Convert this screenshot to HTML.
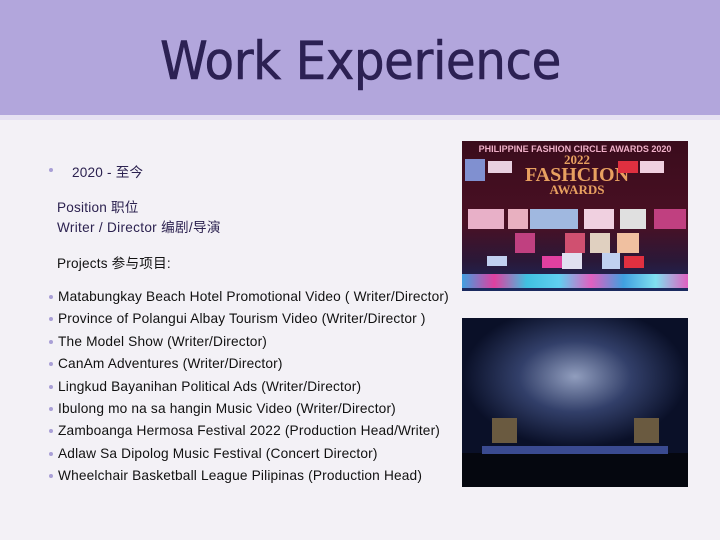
<!DOCTYPE html>
<html><head><meta charset="utf-8"><style>
*{margin:0;padding:0;box-sizing:border-box}
body{width:720px;height:540px;position:relative;overflow:hidden;background:#f3f1f6;font-family:"Liberation Sans","Noto Sans CJK SC",sans-serif}
.hdr{position:absolute;left:0;top:0;width:720px;height:115px;background:#b2a6dc}
.hdr2{position:absolute;left:0;top:115px;width:720px;height:5px;background:#e6e1f2}
h1{position:absolute;left:160px;top:31px;font-weight:normal;font-size:53px;color:#2c2153;letter-spacing:-0.5px;font-family:"DejaVu Sans","Liberation Sans",sans-serif;transform:scaleX(0.913);transform-origin:left;-webkit-text-stroke:0.6px #2c2153}
.t{position:absolute;font-size:14px;color:#2c2250;white-space:nowrap}
.k{color:#111}
.dot{position:absolute;width:4px;height:4px;border-radius:2px;background:#a99fd6}
.img1{position:absolute;left:462px;top:141px;width:226px;height:150px;background:linear-gradient(180deg,#3a0c1c 0%,#4a1024 55%,#2a1838 80%,#1a2a60 100%);overflow:hidden}
.img2{position:absolute;left:462px;top:318px;width:226px;height:169px;background:#0a1028;overflow:hidden}
.b{position:absolute}
</style></head><body>
<div class="hdr"></div><div class="hdr2"></div>
<h1>Work Experience</h1>
<div class="dot" style="left:49px;top:168px"></div>
<div class="t" style="left:72px;top:161px;font-size:13.6px;letter-spacing:0.2px">2020 - 至今</div>
<div class="t" style="left:57px;top:196px;font-size:13.6px;letter-spacing:0.2px">Position 职位</div>
<div class="t" style="left:57px;top:216px;font-size:13.6px;letter-spacing:0.3px">Writer / Director 编剧/导演</div>
<div class="t k" style="left:57px;top:252px;font-size:13.6px;letter-spacing:0.2px">Projects 参与项目:</div>
<div class="t k" style="left:58px;top:286px;line-height:22.4px;font-size:13.7px;letter-spacing:0.17px">
Matabungkay Beach Hotel Promotional Video ( Writer/Director)<br>
Province of Polangui Albay Tourism Video (Writer/Director )<br>
The Model Show (Writer/Director)<br>
CanAm Adventures (Writer/Director)<br>
Lingkud Bayanihan Political Ads (Writer/Director)<br>
Ibulong mo na sa hangin Music Video (Writer/Director)<br>
Zamboanga Hermosa Festival 2022 (Production Head/Writer)<br>
Adlaw Sa Dipolog Music Festival (Concert Director)<br>
Wheelchair Basketball League Pilipinas (Production Head)</div>
<div class="dot" style="left:49px;top:295px"></div>
<div class="dot" style="left:49px;top:317px"></div>
<div class="dot" style="left:49px;top:340px"></div>
<div class="dot" style="left:49px;top:362px"></div>
<div class="dot" style="left:49px;top:385px"></div>
<div class="dot" style="left:49px;top:407px"></div>
<div class="dot" style="left:49px;top:429px"></div>
<div class="dot" style="left:49px;top:452px"></div>
<div class="dot" style="left:49px;top:474px"></div>
<div class="img1">
<div style="position:absolute;left:0;top:3px;width:226px;text-align:center;font-size:9px;font-weight:bold;color:#f0b0c8">PHILIPPINE FASHION CIRCLE AWARDS 2020</div>
<div style="position:absolute;left:50px;top:13px;width:130px;text-align:center;font-family:'Liberation Serif',serif;font-weight:bold;color:#e8a060;font-size:13px;line-height:12px">2022<br><span style="font-size:20px;line-height:18px">FASHCION</span><br>AWARDS</div>
<div class="b" style="left:3px;top:18px;width:20px;height:22px;background:#8090d0"></div>
<div class="b" style="left:26px;top:20px;width:24px;height:12px;background:#e8d0e0"></div>
<div class="b" style="left:178px;top:20px;width:24px;height:12px;background:#f0d0e0"></div>
<div class="b" style="left:156px;top:20px;width:20px;height:12px;background:#e03040"></div>
<div class="b" style="left:6px;top:68px;width:36px;height:20px;background:#e8b0c8"></div>
<div class="b" style="left:46px;top:68px;width:20px;height:20px;background:#e8b0c0"></div>
<div class="b" style="left:68px;top:68px;width:48px;height:20px;background:#a0b8e0"></div>
<div class="b" style="left:122px;top:68px;width:30px;height:20px;background:#f0d0e0"></div>
<div class="b" style="left:158px;top:68px;width:26px;height:20px;background:#e0e0e0"></div>
<div class="b" style="left:192px;top:68px;width:32px;height:20px;background:#c04080"></div>
<div class="b" style="left:53px;top:92px;width:20px;height:20px;background:#c04080"></div>
<div class="b" style="left:103px;top:92px;width:20px;height:20px;background:#d05070"></div>
<div class="b" style="left:128px;top:92px;width:20px;height:20px;background:#e0d0c0"></div>
<div class="b" style="left:155px;top:92px;width:22px;height:20px;background:#f0c0a0"></div>
<div class="b" style="left:25px;top:115px;width:20px;height:10px;background:#c0d0f0"></div>
<div class="b" style="left:80px;top:115px;width:22px;height:12px;background:#e040a0"></div>
<div class="b" style="left:100px;top:112px;width:20px;height:16px;background:#e0e0f0"></div>
<div class="b" style="left:140px;top:112px;width:18px;height:16px;background:#c0d0f0"></div>
<div class="b" style="left:162px;top:115px;width:20px;height:12px;background:#e03040"></div>
<div class="b" style="left:0;top:133px;width:226px;height:14px;background:linear-gradient(90deg,#40a0e0,#e040a0,#40c0e0,#60d0f0,#e060c0,#40a0e0,#80e0f0,#e060c0)"></div>
</div>
<div class="img2">
<div class="b" style="left:0;top:0;width:226px;height:130px;background:radial-gradient(ellipse at 50% 45%,rgba(190,205,240,.75) 0%,rgba(90,110,170,.5) 35%,rgba(10,16,40,0) 70%)"></div>
<div class="b" style="left:30px;top:100px;width:25px;height:25px;background:#6a5a40"></div>
<div class="b" style="left:172px;top:100px;width:25px;height:25px;background:#6a5a40"></div>
<div class="b" style="left:0;top:135px;width:226px;height:34px;background:#05070f"></div>
<div class="b" style="left:20px;top:128px;width:186px;height:8px;background:#3a4a90"></div>
</div>
</body></html>
